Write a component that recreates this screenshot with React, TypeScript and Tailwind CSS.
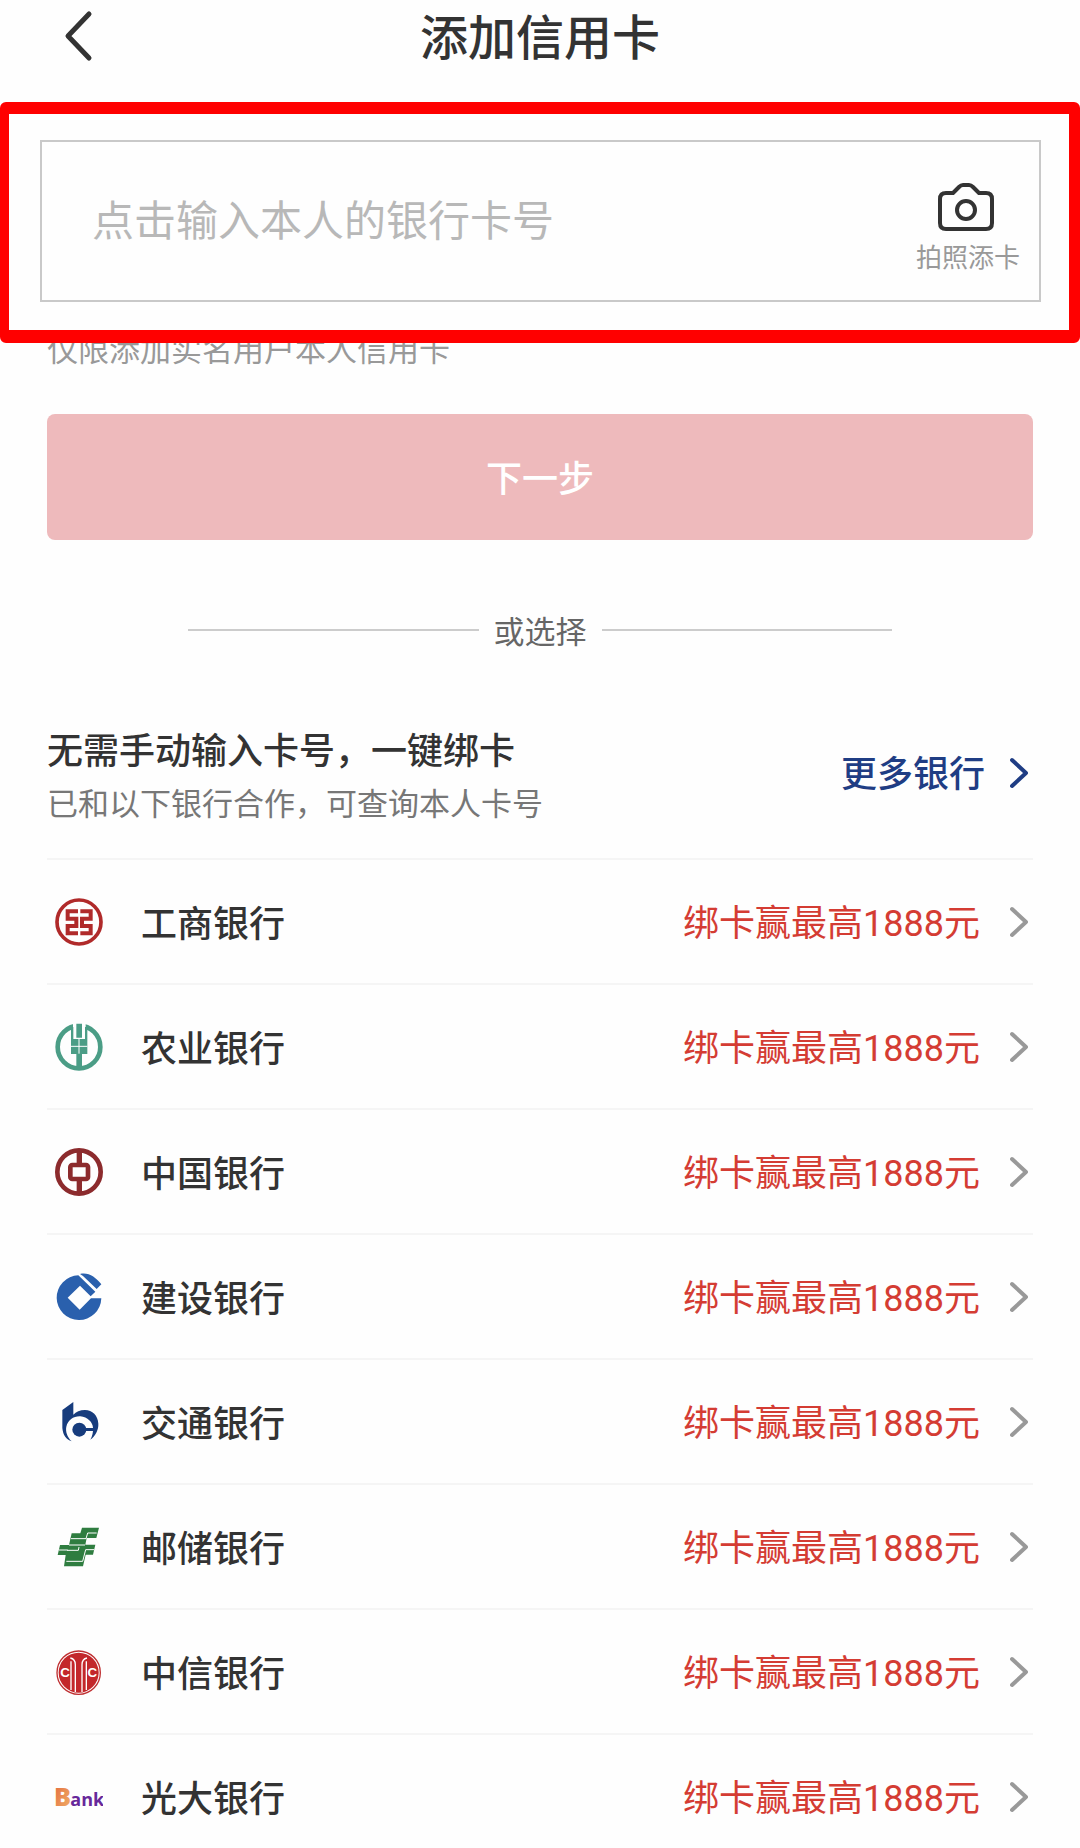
import React, { useState } from 'react';

type Bank = {
  id: string;
  name: string;
  logo: React.ReactNode;
};

const PROMO = '绑卡赢最高1888元';

function IcbcLogo() {
  return (
    <svg viewBox="0 0 144 144" className="w-12 h-12 shrink-0" fill="none" stroke="#b02a2a" aria-hidden="true">
      <circle cx="72" cy="72" r="66" strokeWidth="11" />
      <path d="M69 40H38v22h26v22H38v22h31M76 40h31v22H81v22h26v22H76" strokeWidth="12" />
    </svg>
  );
}

function AbcLogo() {
  return (
    <svg viewBox="0 0 144 144" className="w-12 h-12 shrink-0" aria-hidden="true">
      <circle cx="72" cy="72" r="64" fill="none" stroke="#4b9d86" strokeWidth="14" />
      <path d="M54 0h38v24H54z" fill="#fff" />
      <path d="M64 2h17v42H64zM48 12h7v36h35V12h7v81H81v46H64V93H48z" fill="#4b9d86" />
      <path d="M48 70h49M72 46v46" stroke="#fff" strokeWidth="3" />
    </svg>
  );
}

function BocLogo() {
  return (
    <svg viewBox="0 0 144 144" className="w-12 h-12 shrink-0" fill="none" stroke="#8c2b2d" aria-hidden="true">
      <circle cx="72" cy="72" r="65" strokeWidth="14" />
      <rect x="46" y="51" width="53" height="42" rx="6" strokeWidth="14" />
      <path d="M73 10v38M73 96v38" strokeWidth="16" />
    </svg>
  );
}

function CcbLogo() {
  return (
    <svg viewBox="0 0 144 144" className="w-12 h-12 shrink-0" fill="#2a60ad" aria-hidden="true">
      <path d="M70 7L121 56L107 70L75 38L38 74L74 110L108 76H139A67 67 0 1 1 70 7Z" />
      <path d="M75 3C100 -3 122 12 139 34L125 48L84 9Z" />
    </svg>
  );
}

function BocomLogo() {
  return (
    <svg viewBox="0 0 144 144" className="w-12 h-12 shrink-0" fill="#173c7d" aria-hidden="true">
      <path d="M55 12L22 36V90C24 112 34 124 50 130C36 116 31 100 34 86C39 66 56 54 76 55C98 57 113 73 114 89C115 102 112 114 106 125C122 114 131 94 130 77C129 53 112 36 90 36C75 36 63 41 55 50Z" />
      <circle cx="73" cy="95" r="21" />
      <path d="M86 90h28v9H86z" />
    </svg>
  );
}

function PsbcLogo() {
  return (
    <svg viewBox="0 0 144 144" className="w-12 h-12 shrink-0" aria-hidden="true">
      <path d="M81 14H132L124 45H95L91 65H121L114 95H92L84 130H27L32 96H8L15 66H42L50 31H76Z" fill="#2f7d40" />
      <path d="M125 30H98L93 47H48M12 81H38M42 66H90M36 82H70L72 72M117 80H92L83 115H34" fill="none" stroke="#fff" strokeWidth="3" />
    </svg>
  );
}

function CiticLogo() {
  return (
    <svg viewBox="0 0 144 144" className="w-12 h-12 shrink-0" aria-hidden="true">
      <circle cx="71" cy="74" r="65" fill="#fff" stroke="#bf2f31" strokeWidth="4" />
      <circle cx="71" cy="74" r="60" fill="#c3272b" />
      <g fill="none" stroke="#fff" strokeWidth="4">
        <path d="M46 30C56 32 61 38 61 50V132M81 132V50C81 38 86 32 96 30" />
        <path d="M48 126V40M94 126V40" />
      </g>
      <g fill="#fff" fontSize="40" fontWeight="700" fontFamily="Liberation Sans, sans-serif" textAnchor="middle">
        <text x="30" y="88">C</text>
        <text x="112" y="88">C</text>
      </g>
    </svg>
  );
}

function CebLogo() {
  return (
    <svg viewBox="0 0 144 144" className="w-12 h-12 shrink-0" aria-hidden="true">
      <defs>
        <linearGradient id="ceb" x1="0" y1="0" x2="1" y2="1">
          <stop offset="0" stopColor="#e2663a" />
          <stop offset="1" stopColor="#f2b66c" />
        </linearGradient>
      </defs>
      <g fontFamily="Open Sans, sans-serif">
        <text x="-3" y="100" fontSize="76" fontWeight="800" fill="url(#ceb)">B</text>
        <text x="46" y="100" fontSize="54" fontWeight="700" fill="#67289a">ank</text>
      </g>
    </svg>
  );
}

const banks: Bank[] = [
  { id: 'icbc', name: '工商银行', logo: <IcbcLogo /> },
  { id: 'abc', name: '农业银行', logo: <AbcLogo /> },
  { id: 'boc', name: '中国银行', logo: <BocLogo /> },
  { id: 'ccb', name: '建设银行', logo: <CcbLogo /> },
  { id: 'bocom', name: '交通银行', logo: <BocomLogo /> },
  { id: 'psbc', name: '邮储银行', logo: <PsbcLogo /> },
  { id: 'citic', name: '中信银行', logo: <CiticLogo /> },
  { id: 'ceb', name: '光大银行', logo: <CebLogo /> },
];

function Chevron({ className }: { className: string }) {
  return (
    <svg viewBox="0 0 18 32" className={`w-[18px] h-8 shrink-0 ${className}`} fill="none" stroke="currentColor" strokeLinecap="round" strokeLinejoin="round" aria-hidden="true">
      <path d="M2 3l14 13L2 29" strokeWidth="4" />
    </svg>
  );
}

function CameraIcon() {
  return (
    <svg viewBox="0 0 56 50" className="w-14 h-[50px] mr-1" fill="none" stroke="#333" strokeWidth="4" strokeLinejoin="round" aria-hidden="true">
      <path d="M8 11h7l6-6q2-2 4-2h6q2 0 4 2l6 6h7q6 0 6 6v24q0 6-6 6H8q-6 0-6-6V17q0-6 6-6z" />
      <circle cx="28" cy="28" r="9" />
    </svg>
  );
}

export default function App() {
  const [cardNo, setCardNo] = useState('');

  return (
    <div className="min-h-screen bg-[#fefefe] text-[#333] font-['Noto_Sans_CJK_SC',sans-serif]">
      <header className="grid grid-cols-[1fr_auto_1fr] items-center h-[102px] pb-[30px] px-16">
        <button type="button" aria-label="返回" className="w-8 h-14 flex items-center">
          <svg viewBox="0 0 32 56" className="w-8 h-14" fill="none" stroke="#333" strokeWidth="5" strokeLinecap="round" strokeLinejoin="round">
            <path d="M25 6L4 28l21 22" />
          </svg>
        </button>
        <h1 className="pb-1 text-[48px] leading-[56px] font-medium">添加信用卡</h1>
      </header>

      <section className="relative z-10 bg-[#fefefe] border-[#ff0000] border-t-[12px] border-b-[13px] border-l-[9px] border-r-[11px] rounded-md pt-[26px] pb-7 pl-[31px] pr-7">
        <div className="flex items-center h-[162px] border-2 border-[#c9c9c9] pl-[50px] pr-[19px]">
          <input
            type="text"
            inputMode="numeric"
            aria-label="银行卡号"
            value={cardNo}
            onChange={(e) => setCardNo(e.target.value)}
            placeholder="点击输入本人的银行卡号"
            className="flex-1 min-w-0 h-16 pb-2 text-[42px] bg-transparent outline-none placeholder:text-[#b8b8b8]"
          />
          <button type="button" className="flex flex-col items-center gap-1.5 pt-3.5 shrink-0">
            <CameraIcon />
            <span className="text-[26px] leading-9 text-[#999]">拍照添卡</span>
          </button>
        </div>
      </section>

      <main className="px-[47px]">
        <p className="-mt-[17px] text-[31px] leading-[44px] text-[#999]">仅限添加实名用户本人信用卡</p>

        <button type="button" className="mt-11 w-full h-[126px] pb-0.5 rounded-lg bg-[#eebabc] text-white text-[36px] font-medium">
          下一步
        </button>

        <div className="mt-[68px] px-[141px] flex items-center gap-[15px]">
          <div className="flex-1 h-0.5 bg-[#ccc]" />
          <span className="text-[31px] leading-[44px] text-[#666]">或选择</span>
          <div className="flex-1 h-0.5 bg-[#ccc]" />
        </div>

        <div className="mt-[71px] flex items-center justify-between">
          <div>
            <h2 className="text-[36px] leading-[50px] font-medium">无需手动输入卡号，一键绑卡</h2>
            <p className="mt-[7px] text-[31px] leading-[44px] text-[#777]">已和以下银行合作，可查询本人卡号</p>
          </div>
          <a href="#banks" className="flex items-center gap-[25px] pb-0.5 pr-[5px] text-[36px] leading-[50px] font-medium text-[#1f3d84]">
            <span className="pb-1">更多银行</span>
            <Chevron className="text-[#1f3d84]" />
          </a>
        </div>

        <ul id="banks" className="mt-[34px]">
          {banks.map((bank) => (
            <li key={bank.id} className="border-t-2 border-[#f5f5f5]">
              <a href={`#${bank.id}`} className="flex items-center h-[123px] pl-2 pr-[5px] text-[36px]">
                {bank.logo}
                <span className="ml-[38px] pb-0.5 font-medium">{bank.name}</span>
                <span className="ml-auto mr-[30px] pt-1 text-[#d43c33] font-[Roboto,'Noto_Sans_CJK_SC',sans-serif]">{PROMO}</span>
                <Chevron className="text-[#999]" />
              </a>
            </li>
          ))}
        </ul>
      </main>
    </div>
  );
}
